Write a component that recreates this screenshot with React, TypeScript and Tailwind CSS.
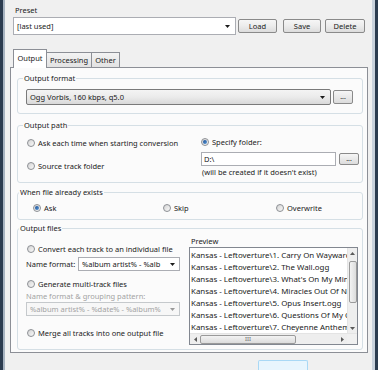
import React from "react";

type RadioProps = { label: string; checked?: boolean };

function Radio({ label, checked = false }: RadioProps) {
  return (
    <div className="flex items-center h-[10px] gap-[3px] whitespace-nowrap">
      <span className="w-[8px] h-[8px] shrink-0 rounded-full border border-[#8d9095] bg-linear-to-br from-[#d4d4d4] to-[#fafafa] flex items-center justify-center">
        {checked && <span className="w-[4px] h-[4px] rounded-full bg-linear-to-br from-[#1c4f94] to-[#5b9ad8]" />}
      </span>
      <span>{label}</span>
    </div>
  );
}

function Arrow({ color = "#1b1b1b" }: { color?: string }) {
  return (
    <svg width="5" height="3" viewBox="0 0 5 3" className="shrink-0">
      <path d="M0 0h5L2.5 3z" fill={color} />
    </svg>
  );
}

function Btn({ label, w }: { label: string; w: string }) {
  return (
    <div
      className={`${w} h-[14px] flex items-center justify-center rounded-[2px] border border-[#8a8a8a] bg-linear-to-b from-[#f6f6f6] via-[#ececec] to-[#dcdcdc] text-[#1a1a1a]`}
    >
      {label}
    </div>
  );
}

function Dots({ h }: { h: string }) {
  return (
    <div className={`w-[20px] ${h} flex items-center justify-center rounded-[2px] border border-[#8a8a8a] bg-linear-to-b from-[#f6f6f6] to-[#dcdcdc] text-[7px] leading-none pb-[2px]`}>
      ...
    </div>
  );
}

const previewRows = [
  "Kansas - Leftoverture\\1. Carry On Wayward Son.ogg",
  "Kansas - Leftoverture\\2. The Wall.ogg",
  "Kansas - Leftoverture\\3. What's On My Mind.ogg",
  "Kansas - Leftoverture\\4. Miracles Out Of Nowhere.ogg",
  "Kansas - Leftoverture\\5. Opus Insert.ogg",
  "Kansas - Leftoverture\\6. Questions Of My Childhood.ogg",
  "Kansas - Leftoverture\\7. Cheyenne Anthem.ogg",
];

export default function App() {
  return (
    <div className="w-[378px] h-[370px] overflow-hidden flex bg-[#2e3f53] font-['Noto_Sans',sans-serif] text-[7.5px] leading-[10px] text-[#1a1a1a]">
      {/* window frame left */}
      <div className="w-[3px] bg-[#2c3c4f]" />
      <div className="w-[2px] bg-[#a7b3c0]" />

      <div className="w-[367px] bg-[#f0f0f0] flex flex-col pt-[5px] pl-[5px]">
        {/* preset */}
        <div className="pl-[5px] h-[10px]">Preset</div>
        <div className="mt-[2px] ml-[3px] flex items-center h-[18px]">
          <div className="w-[223px] h-[18px] bg-white border border-[#abadb3] flex items-center pl-[3px] pr-[5px]">
            <span className="flex-1">[last used]</span>
            <Arrow />
          </div>
          <div className="ml-[2px]">
            <Btn label="Load" w="w-[39px]" />
          </div>
          <div className="ml-[6px]">
            <Btn label="Save" w="w-[38px]" />
          </div>
          <div className="ml-[4px]">
            <Btn label="Delete" w="w-[40px]" />
          </div>
        </div>

        {/* tabs */}
        <div className="mt-[14px] ml-[3px] flex items-end h-[18px]">
          <div className="relative z-10 -mb-px w-[34px] h-[19px] bg-white border border-b-0 border-[#8c8f96] flex items-center justify-center pb-[2px]">
            Output
          </div>
          <div className="-ml-px w-[46px] h-[15px] bg-linear-to-b from-[#f3f3f3] to-[#e2e2e2] border border-b-0 border-[#8c8f96] flex items-center justify-center">
            Processing
          </div>
          <div className="-ml-px w-[29px] h-[15px] bg-linear-to-b from-[#f3f3f3] to-[#e2e2e2] border border-b-0 border-[#8c8f96] flex items-center justify-center">
            Other
          </div>
        </div>

        {/* tab page */}
        <div className="w-[358px] h-[292px] bg-[#fbfbfb] border border-[#8c8f96] flex flex-col">
          {/* output format */}
          <fieldset className="mt-[5px] ml-[6px] w-[346px] border border-[#d5dfe5] rounded-[3px] pl-[8px] pb-[8px] pt-[6px]">
            <legend className="h-[10px] px-[1px] -ml-[3px]">Output format</legend>
            <div className="flex items-center">
              <div className="w-[305px] h-[16px] border border-[#7a7a7a] rounded-[2px] bg-linear-to-b from-[#f4f4f4] via-[#ebebeb] to-[#d9d9d9] flex items-center pl-[3px] pr-[5px]">
                <span className="flex-1">Ogg Vorbis, 160 kbps, q5.0</span>
                <Arrow />
              </div>
              <div className="ml-[2px]">
                <Dots h="h-[14px]" />
              </div>
            </div>
          </fieldset>

          {/* output path */}
          <fieldset className="mt-[6px] ml-[6px] w-[346px] border border-[#d5dfe5] rounded-[3px] pl-[9px] pb-[5px]">
            <legend className="h-[10px] px-[1px] -ml-[4px]">Output path</legend>
            <div className="flex">
              <div className="w-[174px] pt-[8px] flex flex-col">
                <Radio label="Ask each time when starting conversion" />
                <div className="mt-[13px]">
                  <Radio label="Source track folder" />
                </div>
              </div>
              <div className="pt-[7px] flex flex-col">
                <Radio label="Specify folder:" checked />
                <div className="mt-[5px] flex items-center">
                  <div className="w-[135px] h-[14px] bg-white border border-[#abadb3] flex items-center pl-[2px]">D:\</div>
                  <div className="ml-[3px]">
                    <Dots h="h-[12px]" />
                  </div>
                </div>
                <div className="mt-[1px] pl-[1px] h-[10px]">(will be created if it doesn't exist)</div>
              </div>
            </div>
          </fieldset>

          {/* when file exists */}
          <fieldset className="mt-[4px] ml-[6px] w-[346px] border border-[#d5dfe5] rounded-[3px] pl-[15px] pt-[6px] pb-[6px]">
            <legend className="h-[10px] px-[1px] -ml-[14px]">When file already exists</legend>
            <div className="flex">
              <div className="w-[130px]">
                <Radio label="Ask" checked />
              </div>
              <div className="w-[113px]">
                <Radio label="Skip" />
              </div>
              <Radio label="Overwrite" />
            </div>
          </fieldset>

          {/* output files */}
          <fieldset className="mt-[3px] ml-[6px] w-[346px] border border-[#d5dfe5] rounded-[3px] pl-[8px] pb-[4px]">
            <legend className="h-[10px] px-[1px] -ml-[7px]">Output files</legend>
            <div className="flex">
              <div className="w-[163px] pt-[11px] flex flex-col">
                <div className="pl-[1px]">
                  <Radio label="Convert each track to an individual file" />
                </div>
                <div className="mt-[3px] flex items-center h-[14px]">
                  <span className="w-[52px] whitespace-nowrap">Name format:</span>
                  <div className="w-[102px] h-[14px] bg-white border border-[#abadb3] flex items-center pl-[3px] pr-[4px] overflow-hidden">
                    <span className="flex-1 whitespace-nowrap overflow-hidden">%album artist% - %alb</span>
                    <Arrow />
                  </div>
                </div>
                <div className="mt-[8px] pl-[1px]">
                  <Radio label="Generate multi-track files" />
                </div>
                <div className="mt-[2px] h-[10px] text-[#a3a3a3] whitespace-nowrap">Name format &amp; grouping pattern:</div>
                <div className="mt-[1px] w-[154px] h-[14px] bg-[#f7f7f7] border border-[#c5c9cc] flex items-center pl-[3px] pr-[4px] text-[#a3a3a3]">
                  <span className="flex-1 whitespace-nowrap overflow-hidden">%album artist% - %date% - %album%</span>
                  <span className="ml-[3px]">
                    <Arrow color="#9a9a9a" />
                  </span>
                </div>
                <div className="mt-[12px] pl-[1px]">
                  <Radio label="Merge all tracks into one output file" />
                </div>
              </div>

              <div className="pt-[3px] flex flex-col">
                <div className="pl-[2px] h-[10px]">Preview</div>
                <div className="mt-[1px] w-[169px] h-[98px] bg-white border border-[#828790] flex flex-col">
                  <div className="flex flex-1 min-h-0">
                    <div className="flex-1 pt-[1px] pl-[1px] overflow-hidden text-[7.9px]">
                      {previewRows.map((row) => (
                        <div key={row} className="h-[12px] leading-[12px] whitespace-nowrap">
                          {row}
                        </div>
                      ))}
                    </div>
                    {/* vertical scrollbar */}
                    <div className="w-[10px] bg-[#eeeeee] border-l border-[#e4e4e4] flex flex-col items-center">
                      <div className="h-[10px] flex items-center justify-center">
                        <svg width="5" height="3" viewBox="0 0 5 3">
                          <path d="M0 3h5L2.5 0z" fill="#5a5a5a" />
                        </svg>
                      </div>
                      <div className="mt-[3px] w-[8px] h-[42px] rounded-[2px] border border-[#9a9a9a] bg-linear-to-r from-[#f3f3f3] to-[#dcdcdc]" />
                      <div className="flex-1" />
                      <div className="h-[10px] flex items-center justify-center">
                        <Arrow color="#5a5a5a" />
                      </div>
                    </div>
                  </div>
                  {/* horizontal scrollbar */}
                  <div className="h-[11px] flex bg-[#eeeeee] border-t border-[#e4e4e4]">
                    <div className="flex-1 flex items-center">
                      <div className="w-[10px] flex items-center justify-center">
                        <svg width="3" height="5" viewBox="0 0 3 5">
                          <path d="M3 0v5L0 2.5z" fill="#5a5a5a" />
                        </svg>
                      </div>
                      <div className="w-[96px] h-[9px] rounded-[2px] border border-[#9a9a9a] bg-linear-to-b from-[#f3f3f3] to-[#dcdcdc] flex items-center justify-center text-[6px] leading-none text-[#6b6b6b]">
                        III
                      </div>
                      <div className="flex-1" />
                      <div className="w-[10px] flex items-center justify-center">
                        <svg width="3" height="5" viewBox="0 0 3 5">
                          <path d="M0 0v5L3 2.5z" fill="#5a5a5a" />
                        </svg>
                      </div>
                    </div>
                    <div className="w-[10px] bg-[#f0f0f0]" />
                  </div>
                </div>
              </div>
            </div>
          </fieldset>
        </div>

        {/* top of the default button below */}
        <div className="mt-[7px] ml-[248px] w-[50px] h-[10px] border-t border-x border-[#a9d8f5] bg-[#e8f5fd] rounded-t-[2px]" />
      </div>

      {/* window frame right */}
      <div className="w-[3px] bg-[#c9d2dc]" />
      <div className="w-[3px] bg-[#2c3c4f]" />
    </div>
  );
}
